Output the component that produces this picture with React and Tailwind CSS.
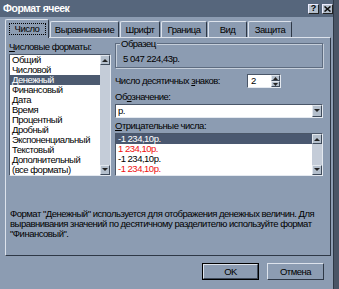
import React from "react";

const font = { fontFamily: '"Liberation Sans", Arial, sans-serif' };

function ScrollBtn({ up }) {
  return (
    <div className="w-[10px] h-[10px] bg-[#b4bfcc] border-t border-l border-t-[#e2e7ee] border-l-[#e2e7ee] border-r border-b border-r-[#3e4a5a] border-b-[#3e4a5a] flex items-center justify-center">
      <svg width="6" height="4" viewBox="0 0 6 4">
        {up ? <path d="M0 4 L3 1 L6 4 Z" fill="#222" /> : <path d="M0 0 L6 0 L3 3 Z" fill="#222" />}
      </svg>
    </div>
  );
}

function Sunken({ className, children }) {
  return (
    <div className={"border-t border-l border-t-[#4a5668] border-l-[#4a5668] border-r border-b border-r-[#e4e9f0] border-b-[#e4e9f0] " + className}>
      {children}
    </div>
  );
}

export default function App() {
  const formats = [
    "Общий",
    "Числовой",
    "Денежный",
    "Финансовый",
    "Дата",
    "Время",
    "Процентный",
    "Дробный",
    "Экспоненциальный",
    "Текстовый",
    "Дополнительный",
    "(все форматы)",
  ];
  const neg = [
    { t: "-1 234,10р.", c: "text-white", sel: true },
    { t: "1 234,10р.", c: "text-[#f01010]" },
    { t: "-1 234,10р.", c: "text-black" },
    { t: "-1 234,10р.", c: "text-[#f01010]" },
  ];
  const tabs = ["Выравнивание", "Шрифт", "Граница", "Вид", "Защита"];
  const tabW = [69, 40, 46, 39, 44];
  return (
    <div className="w-[339px] h-[289px] bg-[#8c9cb2] flex overflow-hidden text-[9.5px] leading-[10px] tracking-[-0.5px] text-black" style={font}>
      <div className="w-[334px] shrink-0 h-full flex flex-col border-r border-r-[#2e3846]">
        <div className="h-[17px] bg-[#56667c] flex items-center justify-between pl-[3px] pr-[0px]">
          <span className="text-white font-bold text-[10.5px] leading-[11px] tracking-[-0.5px]">Формат ячеек</span>
          <div className="flex gap-[3px]">
            <div className="w-[11px] h-[10px] bg-[#b4bfcc] border-t border-l border-t-[#eef] border-l-[#eef] border-r border-b border-r-[#222] border-b-[#222] flex items-center justify-center text-[9px] font-bold leading-[9px] tracking-normal">?</div>
            <div className="w-[11px] h-[10px] bg-[#b4bfcc] border-t border-l border-t-[#eef] border-l-[#eef] border-r border-b border-r-[#222] border-b-[#222] flex items-center justify-center">
              <svg width="7" height="6" viewBox="0 0 7 6"><path d="M0.5 0.5 L6.5 5.5 M6.5 0.5 L0.5 5.5" stroke="#111" strokeWidth="1.6" /></svg>
            </div>
          </div>
        </div>
        <div className="flex flex-col pl-[5px] pt-[2px]">
          <div className="flex items-end h-[18px]">
            <div className="w-[44px] shrink-0 h-[19px] -mb-[1px] border-t border-l border-r border-t-[#dde3ec] border-l-[#dde3ec] border-r-[#2e3846] rounded-t-[2px] flex items-center justify-center relative z-10 bg-[#8c9cb2]">
              <span className="border border-dotted border-black w-[37px] h-[12px] flex items-center justify-center">Число</span>
            </div>
            {tabs.map((t, i) => (
              <div key={t} style={{ width: tabW[i] }} className="shrink-0 h-[16px] ml-[1px] border-t border-l border-r border-t-[#dde3ec] border-l-[#dde3ec] border-r-[#2e3846] rounded-t-[2px] flex items-center justify-center overflow-hidden whitespace-nowrap">
                {t}
              </div>
            ))}
          </div>
          <div className="w-[326px] h-[219px] border-t border-l border-t-[#dde3ec] border-l-[#dde3ec] border-r border-b border-r-[#2e3846] border-b-[#2e3846] flex flex-col pl-[3px] pt-[4px]">
            <div className="flex">
              <div className="w-[102px] flex flex-col">
                <div className="h-[12px] leading-[9px]"><span className="underline">Ч</span>исловые форматы:</div>
                <Sunken className="bg-white h-[122px] flex">
                  <div className="flex-1 flex flex-col">
                    {formats.map((f) => (
                      <div key={f} className={"h-[10px] pl-[2px] whitespace-nowrap " + (f === "Денежный" ? "bg-[#4c5a70] text-white" : "")}>{f}</div>
                    ))}
                  </div>
                  <div className="w-[10px] bg-[#c4ccd8] flex flex-col justify-between">
                    <ScrollBtn up />
                    <ScrollBtn />
                  </div>
                </Sunken>
              </div>
              <div className="w-[208px] flex flex-col ml-[4px]">
                <div className="relative h-[25px] mt-[1px] border border-[#5e6c80] shadow-[inset_1px_1px_0_#c6cfdb,1px_1px_0_#c6cfdb]">
                  <span className="absolute -top-[5px] left-[4px] bg-[#8c9cb2] px-[1px]">Образец</span>
                  <div className="pl-[7px] pt-[10px]">5 047 224,43р.</div>
                </div>
                <div className="flex items-center h-[14px] mt-[6px]">
                  <span className="w-[132px] whitespace-nowrap">Число десятичных <span className="underline">з</span>наков:</span>
                  <Sunken className="w-[34px] h-[14px] bg-white flex items-center">
                    <span className="flex-1 pl-[3px]">2</span>
                    <div className="flex flex-col">
                      <div className="w-[9px] h-[6px] bg-[#b4bfcc] border-t border-l border-t-[#e2e7ee] border-l-[#e2e7ee] border-b border-r border-[#3e4a5a] flex items-center justify-center"><svg width="5" height="3" viewBox="0 0 5 3"><path d="M0 3 L2.5 0 L5 3Z" fill="#222"/></svg></div>
                      <div className="w-[9px] h-[6px] bg-[#b4bfcc] border-t border-l border-t-[#e2e7ee] border-l-[#e2e7ee] border-b border-r border-[#3e4a5a] flex items-center justify-center"><svg width="5" height="3" viewBox="0 0 5 3"><path d="M0 0 L5 0 L2.5 3Z" fill="#222"/></svg></div>
                    </div>
                  </Sunken>
                </div>
                <div className="h-[10px] mt-[4px]">Об<span className="underline">о</span>значение:</div>
                <Sunken className="h-[14px] bg-white flex items-center mt-[2px]">
                  <span className="flex-1 pl-[2px]">р.</span>
                  <div className="w-[10px] h-[12px] bg-[#b4bfcc] border-t border-l border-t-[#e2e7ee] border-l-[#e2e7ee] border-r border-b border-r-[#3e4a5a] border-b-[#3e4a5a] flex items-center justify-center">
                    <svg width="6" height="4" viewBox="0 0 6 4"><path d="M0 0 L6 0 L3 3 Z" fill="#222" /></svg>
                  </div>
                </Sunken>
                <div className="h-[10px] mt-[3px]"><span className="underline">О</span>трицательные числа:</div>
                <Sunken className="h-[43px] bg-white flex mt-[2px]">
                  <div className="flex-1 flex flex-col">
                    {neg.map((n, i) => (
                      <div key={i} className={"h-[10px] pl-[2px] " + n.c + (n.sel ? " bg-[#4a5870]" : "")}>{n.t}</div>
                    ))}
                  </div>
                  <div className="w-[10px] bg-[#c4ccd8] flex flex-col justify-between">
                    <ScrollBtn up />
                    <ScrollBtn />
                  </div>
                </Sunken>
              </div>
            </div>
            <div className="mt-[33px] pl-[1px] flex flex-col whitespace-nowrap">
              <div className="h-[10px]">Формат "Денежный" используется для отображения денежных величин. Для</div>
              <div className="h-[10px]">выравнивания значений по десятичному разделителю используйте формат</div>
              <div className="h-[10px]">"Финансовый".</div>
            </div>
          </div>
          <div className="w-[326px] flex justify-end gap-[8px] mt-[7px] pr-[7px]">
            <div className="w-[57px] h-[17px] border border-black flex">
              <div className="flex-1 border-t border-l border-t-[#dde3ec] border-l-[#dde3ec] border-r border-b border-r-[#3e4a5a] border-b-[#3e4a5a] flex items-center justify-center">OK</div>
            </div>
            <div className="w-[57px] h-[17px] border-t border-l border-t-[#dde3ec] border-l-[#dde3ec] border-r border-b border-r-[#2e3846] border-b-[#2e3846] flex items-center justify-center">Отмена</div>
          </div>
        </div>
      </div>
      <div className="flex-1 bg-[#4a5566]"></div>
    </div>
  );
}
